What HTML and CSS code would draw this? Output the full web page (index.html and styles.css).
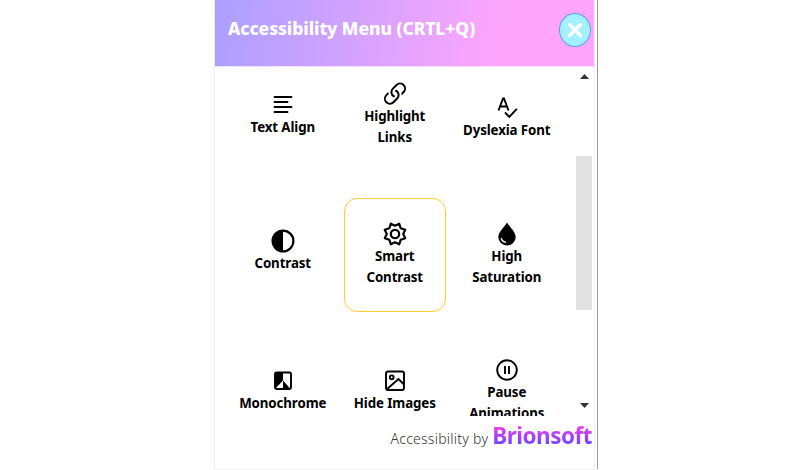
FILE: index.html
```html
<!DOCTYPE html>
<html lang="en">
<head>
<meta charset="utf-8">
<title>Accessibility Menu</title>
<link rel="stylesheet" href="styles.css">
</head>
<body>
<div class="frame">
<section class="panel">
  <header class="header">
    <h1 class="title">Accessibility Menu (CRTL+Q)</h1>
    <button class="close" aria-label="Close"><svg width="16" height="16" viewBox="0 0 16 16"><path d="M2.5 2.5l11 11M13.5 2.5l-11 11" stroke="#fff" stroke-width="3.4" stroke-linecap="round"/></svg></button>
  </header>
  <div class="body">
    <div class="grid">
      <div class="tile mid"><svg class="icon" viewBox="0 0 24 24"><path stroke-linecap="round" d="M3.500 4h17M3.500 9h13M3.500 14h17M3.500 19h13"/></svg><span>Text Align</span></div>
      <div class="tile top"><svg class="icon" viewBox="2 1.700 12 12"><path class="solid" d="M4.715 6.542 3.343 7.914a3 3 0 1 0 4.243 4.243l1.828-1.829A3 3 0 0 0 8.586 5.500L8 6.086a1.002 1.002 0 0 0-.154.199 2 2 0 0 1 .861 3.337L6.880 11.450a2 2 0 1 1-2.830-2.830l.793-.792a4.018 4.018 0 0 1-.128-1.287z"/><path class="solid" d="M6.586 4.672A3 3 0 0 0 7.414 9.500l.775-.776a2 2 0 0 1-.896-3.346L9.120 3.550a2 2 0 1 1 2.830 2.830l-.793.792c.112.420.155.855.128 1.287l1.372-1.372a3 3 0 1 0-4.243-4.243L6.586 4.672z"/></svg><span>Highlight<br>Links</span></div>
      <div class="tile low"><svg class="icon" viewBox="0 0 24 24"><path d="M3.500 14.500L8 2.500h1L13.500 14.500M5 10.500h7M10 16.500l4.300 4.300 7.500-8"/></svg><span>Dyslexia Font</span></div>

      <div class="tile contrast"><svg class="icon" viewBox="0 0 24 24"><circle cx="12" cy="12" r="10.400" stroke-width="2.200"/><path class="solid" d="M12 1.500a10.500 10.500 0 0 0 0 21z"/></svg><span>Contrast</span></div>
      <div class="tile active"><svg class="icon" viewBox="0 0 24 24"><path stroke-linejoin="round" stroke-width="2.100" d="M12 3.800L16.200 1.700 17.700 6.300 22.300 7.800 20.200 12 22.300 16.200 17.700 17.700 16.200 22.300 12 20.200 7.800 22.300 6.300 17.700 1.700 16.200 3.800 12 1.700 7.800 6.300 6.300 7.800 1.700z"/><circle cx="12" cy="12" r="4.200" stroke-width="2.200"/></svg><span>Smart<br>Contrast</span></div>
      <div class="tile drop"><svg class="icon" viewBox="0 0 24 24"><path class="solid" d="M12 .5C9.500 5 3.300 10 3.300 15.200a8.700 8.300 0 0 0 17.400 0C20.700 10 14.500 5 12 .5z"/><path class="glint" d="M6.300 16.500c.5 2 2 3.400 4.200 3.700"/></svg><span>High<br>Saturation</span></div>

      <div class="tile mid"><svg class="icon" viewBox="0 0 24 24"><rect x="4" y="3.500" width="16" height="16.500" rx="1.500"/><path class="solid" d="M4 3.500h8v8L4 20zM12 11.500l7.500 8.500H12z"/></svg><span>Monochrome</span></div>
      <div class="tile mid"><svg class="icon" viewBox="0 0 24 24"><rect x="3" y="2.500" width="18" height="18.500" rx="2"/><circle cx="8.700" cy="8.300" r="1.900"/><path d="M3.500 20.500l12-10.500L21 15.500"/></svg><span>Hide Images</span></div>
      <div class="tile top"><svg class="icon" viewBox="0 0 24 24"><circle cx="12" cy="12" r="9.800"/><path d="M10 8v8M14 8v8"/></svg><span>Pause<br>Animations</span></div>
    </div>
    <div class="scrollbar">
      <svg class="arrow" width="9" height="5" viewBox="0 0 9 5"><path d="M4.500 0L9 5H0z"/></svg>
      <div class="thumb"></div>
      <svg class="arrow down" width="9" height="5" viewBox="0 0 9 5"><path d="M0 0h9L4.500 5z"/></svg>
    </div>
  </div>
  <footer class="footer"><span class="by">Accessibility by</span><span class="brand">Brionsoft</span></footer>
</section>
</div>
</body>
</html>
```
FILE: styles.css
```css
* { box-sizing: border-box; }
body { margin: 0; height: 470px; background: #fff; overflow: hidden; font-family: "Noto Sans", "Open Sans", sans-serif; color: #000; }
.frame { width: 384px; height: 469px; margin-left: 214px; border-right: 1px solid #999; }
.panel { width: 381px; height: 470px; border: 1px solid #eee; border-top: 0; }
.header { display: flex; justify-content: space-between; height: 67px; padding: 13px 3px 0 13px; background: linear-gradient(100deg, #ab9fff 0%, #ffa6fc 76%); border-bottom: 1px solid #f8dcfb; }
.title { margin: 2px 0 0; font-size: 17.5px; line-height: 27px; font-weight: 800; color: #fff; white-space: nowrap; letter-spacing: -.07px; }
.close { display: flex; align-items: center; justify-content: center; width: 32px; height: 34px; padding: 0; border: 1px solid #58a0f5; border-radius: 50%; background: #a4f0ff; }
.body { display: flex; justify-content: space-between; height: 349px; overflow: hidden; }
.grid { display: grid; grid-template-columns: repeat(3, 101.5px); grid-auto-rows: 114px; column-gap: 10.500px; row-gap: 24px; margin: -7px 0 0 17px; }
.tile { display: flex; flex-direction: column; align-items: center; border: 1px solid transparent; border-radius: 13px; text-align: center; font-size: 13.3px; font-weight: 700; line-height: 21px; letter-spacing: -.1px; white-space: nowrap; }
.mid { padding-top: 32px; }
.top { padding-top: 21px; }
.low { padding-top: 35px; }
.contrast { padding-top: 30px; }
.active { padding-top: 23px; border-color: #ffcb3d; }
.drop { padding-top: 23px; }
.icon { display: block; flex: none; width: 24px; height: 24px; fill: none; stroke: #000; stroke-width: 1.900; }
.solid { fill: #000; stroke: none; }
.glint { stroke: #ddd; stroke-width: 1.400; stroke-linecap: round; }
.scrollbar { display: flex; flex-direction: column; align-items: center; width: 16px; margin-right: 2px; padding: 7px 0 8px; }
.arrow { fill: #333; }
.thumb { width: 16px; height: 154px; margin-top: 77px; background: #e1e1e1; }
.down { margin-top: auto; }
.footer { display: flex; justify-content: flex-end; align-items: baseline; height: 53px; padding: 3px 2px 0 0; }
.by { margin-right: 4px; font-size: 14px; font-weight: 300; letter-spacing: .25px; color: #333; }
.brand { font-size: 22.5px; line-height: 34px; font-weight: 700; letter-spacing: -.5px; background: linear-gradient(#f43df0 20%, #7045ff 75%); -webkit-background-clip: text; background-clip: text; color: transparent; }
```
